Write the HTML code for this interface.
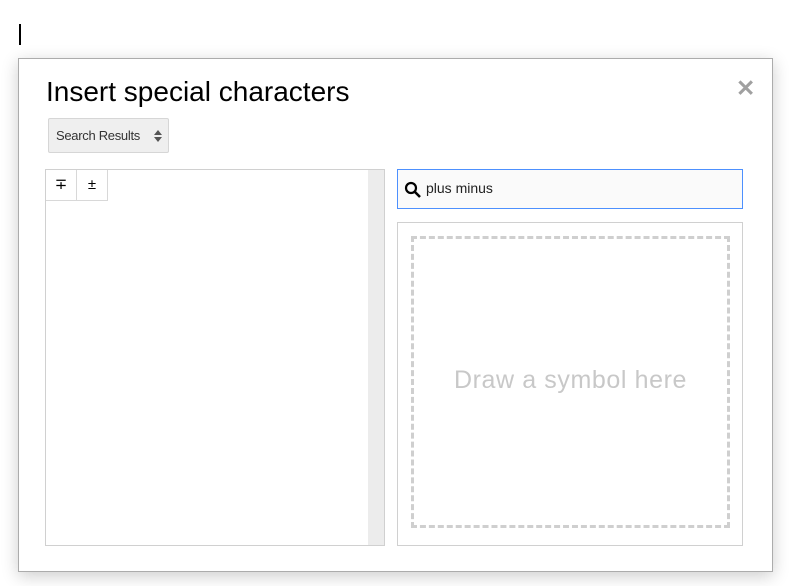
<!DOCTYPE html>
<html><head><style>
html,body{margin:0;padding:0;width:789px;height:586px;background:#fff;overflow:hidden;font-family:"Liberation Sans",Roboto,sans-serif;position:relative}
.cursor{position:absolute;left:19px;top:24px;width:2px;height:21px;background:#000}
.dlg{position:absolute;left:18px;top:58px;width:753px;height:512px;border:1px solid #acacac;background:#fff;box-shadow:0 4px 16px rgba(0,0,0,.2)}
.title{position:absolute;left:27px;top:17px;font-size:28px;color:#000}
.close{position:absolute;left:717px;top:16px;font-size:23px;color:#a0a0a0;font-weight:bold}
.sel{position:absolute;left:29px;top:59px;width:121px;height:35px;border:1px solid #d6d6d6;border-radius:2px;background:#efefef;font-size:13px;letter-spacing:-0.3px;color:#333;line-height:33px;padding-left:7px;box-sizing:border-box}
.grid{position:absolute;left:26px;top:110px;width:338px;height:375px;border:1px solid #d0d0d0}
.scroll{position:absolute;right:0;top:0;width:16px;height:100%;background:#ececec}
.cell{position:absolute;top:0;width:30px;height:30px;border-right:1px solid #d8d8d8;border-bottom:1px solid #d8d8d8;text-align:center;line-height:30px;font-size:15px}
.search{position:absolute;left:378px;top:110px;width:344px;height:38px;border:1px solid #4d90fe;background:#fafafa}
.search span{position:absolute;left:28px;top:10px;font-size:14px;color:#222}
.draw{position:absolute;left:378px;top:163px;width:344px;height:322px;border:1px solid #d0d0d0}
.dash{position:absolute;left:13px;top:13px;width:313px;height:286px;border:3px dashed #cfcfcf}
.dash span{position:absolute;left:0;right:0;top:127px;text-align:center;font-size:25px;letter-spacing:0.6px;color:#c8c8c8}
</style></head><body>
<div class="cursor"></div>
<div class="dlg">
 <div class="title">Insert special characters</div>
 <div class="close">✕</div>
 <div class="sel">Search Results
  <svg style="position:absolute;right:5px;top:10px" width="10" height="14"><path d="M1 6L5 1L9 6Z M1 8L5 13L9 8Z" fill="#555"/></svg>
 </div>
 <div class="grid">
  <div class="cell" style="left:0">∓</div>
  <div class="cell" style="left:31px">±</div>
  <div class="scroll"></div>
 </div>
 <div class="search">
  <svg style="position:absolute;left:6px;top:11px" width="18" height="18" viewBox="0 0 18 18"><circle cx="7" cy="7" r="5" fill="none" stroke="#000" stroke-width="2.2"/><path d="M10.5 10.5L16 16" stroke="#000" stroke-width="2.6"/></svg>
  <span>plus minus</span>
 </div>
 <div class="draw"><div class="dash"><span>Draw a symbol here</span></div></div>
</div>
</body></html>
